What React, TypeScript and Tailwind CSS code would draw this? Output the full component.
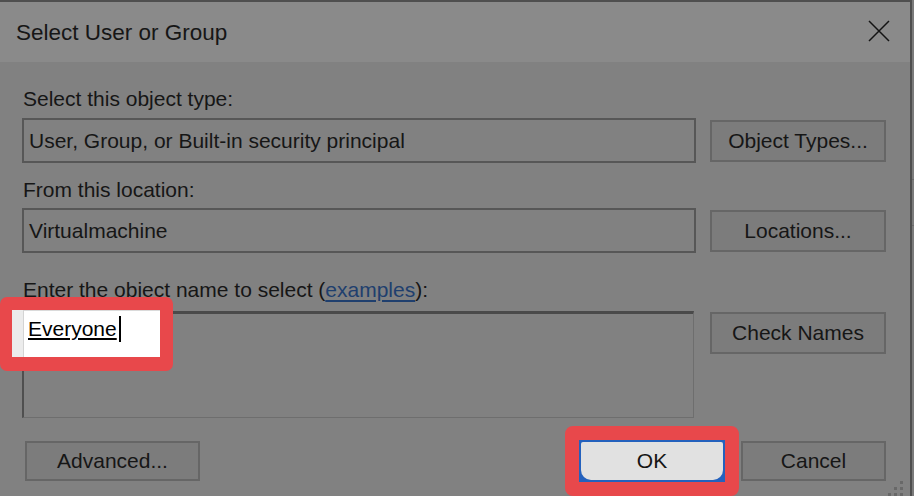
const font = { fontFamily: '"Liberation Sans", Arial, sans-serif' };

function DimButton({ label, className = "" }: { label: string; className?: string }) {
  return (
    <button
      className={`h-[42px] w-[176px] border-2 border-[#666666] bg-[#7c7c7c] text-[21px] text-[#161616] ${className}`}
    >
      {label}
    </button>
  );
}

function Label({ children }: { children: React.ReactNode }) {
  return <div className="h-[26px] pl-px text-[21px] leading-[26px] text-[#161616]">{children}</div>;
}

export default function App() {
  return (
    <div style={font} className="w-[914px] h-[496px] overflow-hidden bg-[#7b7b7b] flex">
      <div className="relative w-[912px] h-full border-t-2 border-r-2 border-[#4f4f4f] bg-[#818181] flex flex-col">
        {/* title bar */}
        <div className="h-[60px] shrink-0 bg-[#8a8a8a] flex items-center justify-between pl-4 pr-[20px]">
          <span className="text-[22.5px] text-[#161616] pt-[1px]">Select User or Group</span>
          <svg width="22" height="22" viewBox="0 0 22 22" className="mt-[-2px]">
            <path d="M1 1 L21 21 M21 1 L1 21" stroke="#141414" strokeWidth="1.5" fill="none" />
          </svg>
        </div>

        <div className="flex flex-col pl-[22px] pr-[24px]">
          <div className="mt-[24px]">
            <Label>Select this object type:</Label>
          </div>
          <div className="mt-[6px] flex items-center gap-[14px] h-[45px]">
            <div className="w-[674px] h-[45px] border-2 border-[#575757] flex items-center pl-[5px] text-[21px] text-[#161616]">
              User, Group, or Built-in security principal
            </div>
            <DimButton label="Object Types..." />
          </div>

          <div className="mt-[14px]">
            <Label>From this location:</Label>
          </div>
          <div className="mt-[5px] flex items-center gap-[14px] h-[45px]">
            <div className="w-[674px] h-[45px] border-2 border-[#575757] flex items-center pl-[5px] text-[21px] text-[#161616]">
              Virtualmachine
            </div>
            <DimButton label="Locations..." />
          </div>

          <div className="mt-[24px]">
            <Label>
              Enter the object name to select (
              <span className="text-[#1f3f6e] underline underline-offset-[3px]">examples</span>):
            </Label>
          </div>
          <div className="mt-[8px] flex items-start gap-[16px]">
            <div className="relative w-[672px] h-[107px] border-t-[3px] border-l-2 border-r border-b border-t-[#4a4a4a] border-l-[#4f4f4f] border-r-[#6e6e6e] border-b-[#6e6e6e]">
              {/* highlighted entry */}
              <div className="absolute left-[-24px] top-[-17px] w-[173px] h-[74px] rounded-[7px] border-[13px] border-l-[12px] border-b-[14px] border-[#e8484b] bg-white flex">
                <div className="w-[12px] h-full bg-[#ececec] border-r border-[#d4d4d4]" />
                <div className="flex items-start pl-[4px] pt-[6px] border-t border-[#dadada] flex-1">
                  <span className="text-[21px] leading-[24px] text-black underline underline-offset-[2px]">
                    Everyone
                  </span>
                  <span className="ml-[2px] mt-[-1px] w-[2px] h-[26px] bg-black" />
                </div>
              </div>
            </div>
            <DimButton label="Check Names" className="mt-px" />
          </div>

          <div className="mt-[22px] flex items-center h-[42px]">
            <button className="ml-[3px] h-[40px] w-[175px] border-2 border-[#666666] bg-[#7c7c7c] text-[21px] text-[#161616]">
              Advanced...
            </button>
            <div className="relative ml-[379px] w-[146px] h-[42px]">
              <div className="absolute -inset-[14px] rounded-[8px] border-[14px] border-[#e8484b]" />
              <button className="w-full h-full bg-[#2461bd] p-[2px]">
                <div className="w-full h-full bg-[#e1e1e1] rounded-[2px] rounded-b-[10px] flex items-center justify-center text-[21px] text-[#141414]">
                  OK
                </div>
              </button>
            </div>
            <button className="ml-[16px] h-[40px] w-[145px] border-2 border-[#666666] bg-[#7c7c7c] text-[21px] text-[#161616]">
              Cancel
            </button>
          </div>
        </div>

        {/* size grip */}
        <svg className="absolute right-[4px] bottom-0" width="20" height="16" viewBox="0 0 20 16">
          <g fill="#686868">
            <rect x="14" y="1" width="3" height="3" />
            <rect x="8" y="7" width="3" height="3" />
            <rect x="14" y="7" width="3" height="3" />
            <rect x="2" y="13" width="3" height="3" />
            <rect x="8" y="13" width="3" height="3" />
            <rect x="14" y="13" width="3" height="3" />
          </g>
        </svg>
      </div>
      <div className="flex-1 h-full flex flex-col">
        <div className="h-[180px] border-b border-[#6a6a6a]" />
        <div className="h-[46px] border-b border-[#6a6a6a]" />
      </div>
    </div>
  );
}
